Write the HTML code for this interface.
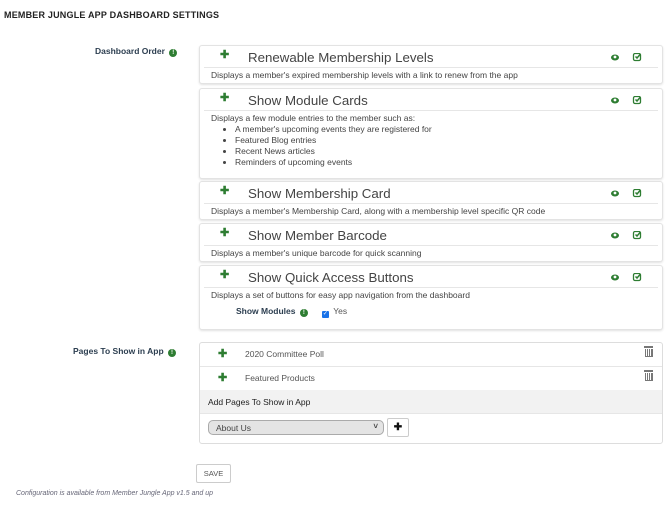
<!DOCTYPE html><html><head><style>
body{margin:0;width:670px;height:514px;background:#fff;font-family:"Liberation Sans",sans-serif;color:#333;position:relative;overflow:hidden}
.a{position:absolute}
.h{left:4px;top:10px;font-size:9px;font-weight:bold;color:#222;letter-spacing:.2px}
.lbl{font-size:8.5px;font-weight:bold;color:#2c3e50}
.i{display:inline-block;width:8px;height:8px;border-radius:50%;background:#2e7d32;color:#fff;font-size:6px;text-align:center;line-height:8px;vertical-align:0;margin-left:2px}
.card{left:199px;width:462px;border:1px solid #e3e3e3;border-radius:3px;box-shadow:0 1px 2px rgba(0,0,0,.12);background:#fff}
.card .t{position:absolute;left:48px;top:4px;font-size:13.3px;color:#444}
.card .mv{position:absolute;left:20px;top:2px;color:#2e7d32;font-size:11px;font-weight:bold}
.card .hr{position:absolute;left:4px;right:4px;top:21px;border-top:1px solid #e6e6e6}
.card .d{position:absolute;left:11px;top:24px;font-size:8.5px;color:#444;line-height:11px}
.card .ic{position:absolute;right:20px;top:7px}
ul{margin:0;padding-left:24px}
.pl{left:199px;width:462px;top:342px;height:100px;border:1px solid #ddd;border-radius:3px}
.row{position:absolute;left:0;right:0;height:23px;border-bottom:1px solid #e6e6e6;font-size:8.5px;color:#555}
.tr{position:absolute;right:9px;top:6px;width:6px;height:7px;border:1px solid #777;border-top:none;background:repeating-linear-gradient(90deg,#fff 0 1px,#777 1px 2px)}
.tr:before{content:"";position:absolute;left:-2px;top:-3px;width:9px;height:1.5px;background:#777}
</style></head><body>
<div class="a h">MEMBER JUNGLE APP DASHBOARD SETTINGS</div>
<div class="a lbl" style="left:95px;top:46px">Dashboard Order <span class="i">!</span></div>
<div class="a lbl" style="left:73px;top:346px">Pages To Show in App <span class="i">!</span></div>

<svg width="0" height="0" style="position:absolute"><defs>
<g id="ic"><ellipse cx="4" cy="4.5" rx="4" ry="3" fill="#2e7d32"/><circle cx="4" cy="4" r="1.4" fill="#fff"/>
<rect x="22.5" y="0.5" width="7" height="7" rx="1.5" fill="none" stroke="#2e7d32" stroke-width="1.3"/><path d="M24.5 3.5l1.5 1.5 3.5-4" fill="none" stroke="#2e7d32" stroke-width="1.5"/></g>
</defs></svg>

<div class="a card" style="top:45px;height:37px"><span class="mv">✚</span><span class="t">Renewable Membership Levels</span><svg class="ic" width="31" height="9"><use href="#ic"/></svg><div class="hr"></div><div class="d">Displays a member's expired membership levels with a link to renew from the app</div></div>
<div class="a card" style="top:88px;height:89px"><span class="mv">✚</span><span class="t">Show Module Cards</span><svg class="ic" width="31" height="9"><use href="#ic"/></svg><div class="hr"></div><div class="d">Displays a few module entries to the member such as:<ul><li>A member's upcoming events they are registered for</li><li>Featured Blog entries</li><li>Recent News articles</li><li>Reminders of upcoming events</li></ul></div></div>
<div class="a card" style="top:181px;height:37px"><span class="mv">✚</span><span class="t">Show Membership Card</span><svg class="ic" width="31" height="9"><use href="#ic"/></svg><div class="hr"></div><div class="d">Displays a member's Membership Card, along with a membership level specific QR code</div></div>
<div class="a card" style="top:223px;height:37px"><span class="mv">✚</span><span class="t">Show Member Barcode</span><svg class="ic" width="31" height="9"><use href="#ic"/></svg><div class="hr"></div><div class="d">Displays a member's unique barcode for quick scanning</div></div>
<div class="a card" style="top:265px;height:63px"><span class="mv">✚</span><span class="t">Show Quick Access Buttons</span><svg class="ic" width="31" height="9"><use href="#ic"/></svg><div class="hr"></div><div class="d">Displays a set of buttons for easy app navigation from the dashboard<div style="margin-top:5px"><span style="margin-left:25px" class="lbl">Show Modules <span class="i">!</span></span><span style="display:inline-block;width:7px;height:7px;background:#1a73e8;border-radius:1px;margin-left:14px;vertical-align:-1px;color:#fff;font-size:6px;line-height:7px;text-align:center">✓</span> <span style="color:#555;margin-left:2px">Yes</span></div></div></div>

<div class="a pl">
<div class="row" style="top:0"><span class="a" style="left:18px;top:4px;color:#2e7d32;font-weight:bold;font-size:11px">✚</span><span class="a" style="left:45px;top:6px">2020 Committee Poll</span><span class="tr"></span></div>
<div class="row" style="top:24px"><span class="a" style="left:18px;top:4px;color:#2e7d32;font-weight:bold;font-size:11px">✚</span><span class="a" style="left:45px;top:6px">Featured Products</span><span class="tr"></span></div>
<div class="row" style="top:47px;background:#f2f2f2;color:#222"><span class="a" style="left:8px;top:7px">Add Pages To Show in App</span></div>
<div class="a" style="left:8px;top:77px;width:176px;height:15px;background:#e4e4e4;border:1px solid #aaa;border-radius:5px;font-size:8.5px;color:#444;line-height:14px;box-sizing:border-box;padding-left:7px">About Us<span style="position:absolute;right:5px;top:-1px;font-size:8px;font-weight:bold">˅</span></div>
<div class="a" style="left:187px;top:75px;width:20px;height:17px;border:1px solid #ccc;border-radius:2px;text-align:center;font-size:10px;font-weight:bold;line-height:17px;color:#111">✚</div>
</div>
<div class="a" style="left:196px;top:464px;width:33px;height:17px;border:1px solid #ccc;border-radius:2px;font-size:7.5px;text-align:center;line-height:17px;color:#555">SAVE</div>
<div class="a" style="left:16px;top:490px;font-size:7px;font-style:italic;color:#667">Configuration is available from Member Jungle App v1.5 and up</div>
</body></html>
